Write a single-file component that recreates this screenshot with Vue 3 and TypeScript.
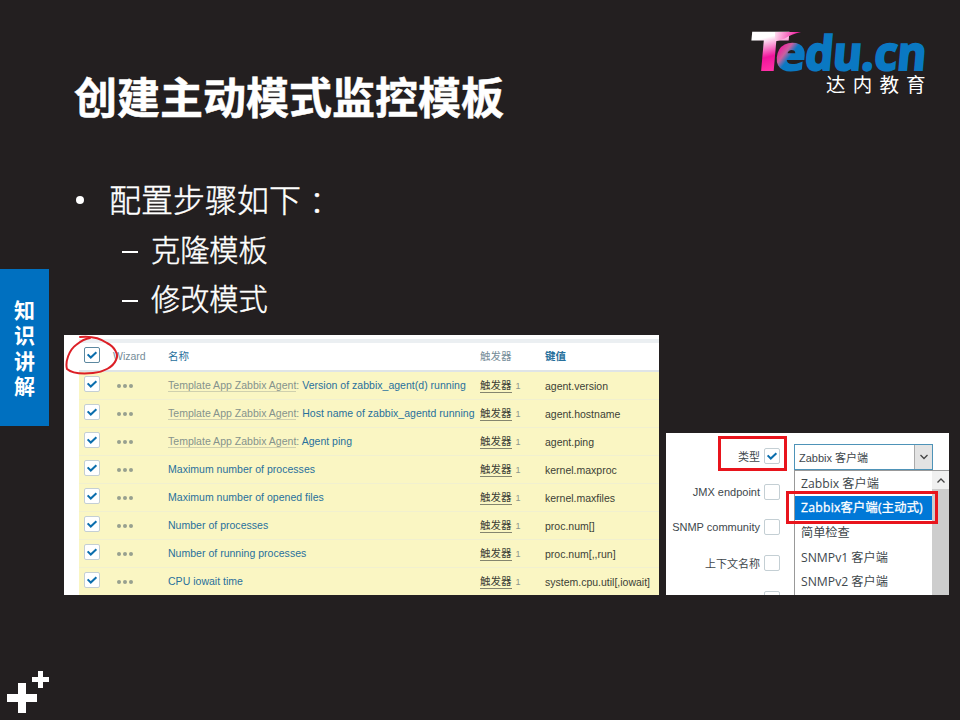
<script setup lang="ts">
interface Item {
  prefix?: string
  name: string
  key: string
}

const template = 'Template App Zabbix Agent'

const items: Item[] = [
  { prefix: template, name: 'Version of zabbix_agent(d) running', key: 'agent.version' },
  { prefix: template, name: 'Host name of zabbix_agentd running', key: 'agent.hostname' },
  { prefix: template, name: 'Agent ping', key: 'agent.ping' },
  { name: 'Maximum number of processes', key: 'kernel.maxproc' },
  { name: 'Maximum number of opened files', key: 'kernel.maxfiles' },
  { name: 'Number of processes', key: 'proc.num[]' },
  { name: 'Number of running processes', key: 'proc.num[,,run]' },
  { name: 'CPU iowait time', key: 'system.cpu.util[,iowait]' },
]

const fields: { label: string; checked: boolean }[] = [
  { label: '类型', checked: true },
  { label: 'JMX endpoint', checked: false },
  { label: 'SNMP community', checked: false },
  { label: '上下文名称', checked: false },
  { label: '', checked: false },
]

const options: string[] = ['Zabbix 客户端', 'Zabbix客户端(主动式)', '简单检查', 'SNMPv1 客户端', 'SNMPv2 客户端']
const selected = 1
const tabChars: string[] = ['知', '识', '讲', '解']
</script>

<template>
  <div class="slide">
    <header class="top">
      <h1 class="title">创建主动模式监控模板</h1>
      <div class="brand">
        <svg class="logo" width="180" height="44" viewBox="0 0 180 44">
          <defs>
            <linearGradient id="gt" gradientUnits="userSpaceOnUse" x1="10" y1="-40" x2="20" y2="0">
              <stop offset="0.2" stop-color="#fff" />
              <stop offset="0.68" stop-color="#f0149c" />
              <stop offset="1" stop-color="#ff2fa6" />
            </linearGradient>
            <linearGradient id="gw" gradientUnits="userSpaceOnUse" x1="26" y1="0" x2="50" y2="6">
              <stop offset="0" stop-color="#ffeaf5" />
              <stop offset="1" stop-color="#f0149c" />
            </linearGradient>
            <linearGradient id="ge" gradientUnits="userSpaceOnUse" x1="1" y1="-20" x2="19" y2="-8">
              <stop offset="0" stop-color="#f3179d" />
              <stop offset="0.4" stop-color="#c9609f" />
              <stop offset="0.7" stop-color="#0a78c2" />
            </linearGradient>
          </defs>
          <g transform="translate(0 43) skewX(-5)">
            <text class="mark cap" textLength="37" lengthAdjust="spacingAndGlyphs" fill="url(#gt)">T</text>
          </g>
          <path d="M26 5H52Q42 7 36 11.500L26 14.500Z" fill="url(#gw)" />
          <g transform="translate(25.500 42.500) skewX(-5)">
            <text class="mark" textLength="30" lengthAdjust="spacingAndGlyphs" fill="url(#ge)" stroke="url(#ge)">e</text>
          </g>
          <g transform="translate(55 42.500) skewX(-5)">
            <text class="mark blue" textLength="121" lengthAdjust="spacingAndGlyphs">du.cn</text>
          </g>
        </svg>
        <div class="brand-name">达内教育</div>
      </div>
    </header>

    <div class="body">
      <aside class="tab">
        <span v-for="c in tabChars" :key="c">{{ c }}</span>
      </aside>

      <main class="content">
        <ul class="steps">
          <li class="lead"><i class="dot"></i><span>配置步骤如下</span><span class="colon">：</span></li>
          <li class="sub"><i class="dash"></i><span>克隆模板</span></li>
          <li class="sub"><i class="dash"></i><span>修改模式</span></li>
        </ul>

        <div class="shots">
          <section class="items">
            <div class="strip"></div>
            <div class="row head">
              <span class="box dark">
                <svg viewBox="0 0 16 16"><path d="M3 7.300 6.600 10.900 13 4.800" /></svg>
              </span>
              <span class="wizard">Wizard</span>
              <span class="name link">名称</span>
              <span class="trig-head">触发器</span>
              <span class="key link strong">键值</span>
            </div>
            <div v-for="it in items" :key="it.name" class="row item">
              <span class="box">
                <svg viewBox="0 0 16 16"><path d="M3 7.300 6.600 10.900 13 4.800" /></svg>
              </span>
              <span class="dots"><i></i><i></i><i></i></span>
              <span class="name"><template v-if="it.prefix"><span class="prefix">{{ it.prefix }}</span><span class="grey">: </span></template><span class="link">{{ it.name }}</span></span>
              <span class="trig"><span class="under">触发器</span><small>1</small></span>
              <span class="key">{{ it.key }}</span>
            </div>
            <svg class="ring" width="60" height="46" viewBox="0 0 60 46">
              <path d="M16 2C26 1 36 3 43 8C51 12 55 20 52 25C49 32 40 37 29 38C18 39 8 38.500 3 34C1 27 5 15 12 10C17 6 21 3.500 26 3" />
            </svg>
          </section>

          <section class="form">
            <div class="labels">
              <div v-for="f in fields" :key="f.label" class="field">
                <span>{{ f.label }}</span>
                <span class="box">
                  <svg v-if="f.checked" viewBox="0 0 16 16"><path d="M3 7.300 6.600 10.900 13 4.800" /></svg>
                </span>
              </div>
            </div>
            <div class="picker">
              <div class="select">
                <span>Zabbix 客户端</span>
                <span class="arrow">
                  <svg width="10" height="6" viewBox="0 0 10 6"><path d="M1.500 1 5 4.500 8.500 1" /></svg>
                </span>
              </div>
              <div class="menu">
                <div class="options">
                  <div v-for="(o, i) in options" :key="o" class="option" :class="{ on: i === selected }">{{ o }}</div>
                </div>
                <div class="scroll">
                  <div class="up"><svg width="10" height="7" viewBox="0 0 10 7"><path d="M1.500 5.500 5 2 8.500 5.500" /></svg></div>
                </div>
              </div>
            </div>
            <div class="mark-box type-mark"></div>
            <div class="mark-box option-mark"></div>
          </section>
        </div>
      </main>
    </div>

    <footer class="foot">
      <svg width="50" height="50" viewBox="0 0 50 50">
        <path class="plus" d="M18 13h8v11h11v8h-11v11h-8v-11h-11v-8h11zM38 1h5v6h6v5h-6v6h-5v-6h-6v-5h6z" />
      </svg>
    </footer>
  </div>
</template>

<style>
body {
  background: #231f20;
}
</style>

<style scoped>
.slide {
  width: 960px;
  height: 720px;
  background: #231f20;
  color: #fff;
  font-family: 'Liberation Sans', 'Noto Sans CJK SC', sans-serif;
  display: flex;
  flex-direction: column;
  overflow: hidden;
}
.top {
  height: 160px;
  flex: none;
  display: flex;
  justify-content: space-between;
  padding: 0 31px 0 74px;
  box-sizing: border-box;
}
.title {
  margin: 64px 0 0;
  font: 700 43px/62px 'Noto Sans CJK SC', sans-serif;
  -webkit-text-stroke: 0.5px #fff;
  white-space: nowrap;
}
.brand {
  width: 180px;
  padding-top: 27px;
}
.logo {
  display: block;
  overflow: visible;
}
.mark {
  font: 700 47px 'Noto Sans', sans-serif;
  stroke-width: 2.200;
}
.mark.cap {
  font-size: 52px;
  stroke: url(#gt);
}
.blue {
  fill: #0a78c2;
  stroke: #0a78c2;
}
.brand-name {
  font: 400 19.500px/26px 'Noto Sans CJK SC', sans-serif;
  letter-spacing: 7.200px;
  padding-left: 77px;
  white-space: nowrap;
}
.body {
  display: flex;
  height: 435px;
  flex: none;
}
.tab {
  width: 49px;
  height: 157px;
  margin-top: 109px;
  flex: none;
  background: #0070c0;
  display: flex;
  flex-direction: column;
  align-items: center;
  justify-content: center;
  font: 700 21px/25.500px 'Noto Sans CJK SC', sans-serif;
}
.content {
  padding-left: 15px;
  flex: none;
}
.steps {
  list-style: none;
  margin: 0;
  padding: 13px 0 0;
  height: 175px;
  box-sizing: border-box;
  font-family: 'Noto Sans CJK SC', sans-serif;
  font-weight: 300;
  -webkit-text-stroke: 0.45px #fff;
}
.steps li {
  display: flex;
  align-items: center;
  white-space: nowrap;
}
.lead {
  font-size: 32px;
  height: 50px;
  padding-left: 12px;
}
.dot {
  width: 8px;
  height: 8px;
  border-radius: 50%;
  background: #fff;
  margin: 4px 25px 0 0;
}
.colon {
  font-family: 'Noto Sans CJK TC', sans-serif;
  font-size: 30px;
  padding: 5px 0 0 1px;
}
.sub {
  font-size: 29.200px;
  height: 49px;
  padding: 1px 0 0 58px;
  box-sizing: border-box;
}
.dash {
  width: 16px;
  height: 2px;
  background: #fff;
  margin: 8px 13px 0 0;
}
.shots {
  display: flex;
  align-items: flex-end;
  gap: 7px;
  height: 260px;
}
.items {
  position: relative;
  width: 595px;
  height: 260px;
  background: #fff;
  overflow: hidden;
  font-size: 10.500px;
  color: #3c3f36;
}
.strip {
  height: 4px;
  margin: 4px 0 0 15px;
  background: #ebeff2;
}
.row {
  display: grid;
  grid-template-columns: 31px 54px 312px 65px 1fr;
  align-items: center;
  margin-left: 15px;
  padding-left: 4px;
  height: 28px;
  box-sizing: border-box;
  white-space: nowrap;
}
.head {
  color: #768d99;
  height: 29px;
  padding-bottom: 4px;
  border-bottom: 2px solid #dfe4e7;
  align-items: start;
  line-height: 26px;
}
.wizard {
  margin-left: -1px;
}
.item {
  background: #faf6c3;
  border-bottom: 1px solid #f1f0cf;
}
.item .name {
  margin-top: -1px;
  letter-spacing: 0.020px;
}
.box {
  width: 16px;
  height: 16px;
  border: 1px solid #c4cfd4;
  border-radius: 2px;
  background: #fff;
  box-sizing: border-box;
  display: block;
}
.item .box {
  margin: -3px 0 0;
}
.box svg {
  display: block;
  width: 14px;
  height: 14px;
}
.box path {
  fill: none;
  stroke: #0b6ead;
  stroke-width: 2.300;
}
.box.dark {
  border-color: #5c88a0;
  margin: 4px 0 0;
}
.row .box {
  margin-left: 0.500px;
}
.link {
  color: #28709c;
}
.strong {
  font-weight: 700;
}
.prefix {
  color: #85938c;
  border-bottom: 1px solid #cfd0ae;
}
.grey {
  color: #85938c;
}
.dots {
  display: flex;
  gap: 2px;
  padding-left: 3px;
}
.dots i {
  width: 4px;
  height: 4px;
  border-radius: 50%;
  background: #97a08f;
}
.trig {
  display: flex;
  align-items: baseline;
  gap: 4px;
  margin-top: 1px;
}
.under {
  border-bottom: 1px solid #84856f;
  line-height: 13px;
}
.trig small {
  font-size: 9px;
  color: #8d968c;
}
.ring {
  position: absolute;
  left: 0;
  top: 0;
}
.ring path {
  fill: none;
  stroke: #dc1f26;
  stroke-width: 2;
  stroke-linecap: round;
}
.form {
  position: relative;
  width: 283px;
  height: 162px;
  background: #fff;
  color: #40474c;
  display: flex;
  overflow: hidden;
  font-size: 11px;
}
.labels {
  width: 114px;
  margin-right: 14px;
  padding-top: 5.500px;
  flex: none;
}
.field {
  height: 35.600px;
  display: flex;
  align-items: center;
  justify-content: flex-end;
  gap: 4px;
  white-space: nowrap;
}
.picker {
  flex: 1;
  padding-top: 11px;
}
.select {
  width: 139px;
  height: 26px;
  border: 1px solid #4e93b8;
  box-sizing: border-box;
  display: flex;
  justify-content: space-between;
  align-items: center;
  padding-left: 4px;
}
.arrow {
  width: 18px;
  height: 24px;
  background: #e3e3e3;
  border-left: 1px solid #aaa;
  box-sizing: border-box;
  display: flex;
  align-items: center;
  justify-content: center;
}
.arrow path,
.up path {
  fill: none;
  stroke: #444;
  stroke-width: 1.300;
}
.menu {
  display: flex;
  height: 126px;
  border: 1px solid #999;
  border-right: 0;
  box-sizing: border-box;
}
.options {
  width: 137px;
  font: 12.200px/24.500px 'Open Sans', 'Noto Sans CJK SC', sans-serif;
}
.option {
  height: 24.500px;
  line-height: 26px;
  padding-left: 6px;
  white-space: nowrap;
}
.option.on {
  background: #0078d7;
  color: #fff;
  line-height: 24.500px;
  letter-spacing: 0.250px;
  -webkit-text-stroke: 0.3px #fff;
}
.scroll {
  flex: 1;
  background: #cdcdcd;
}
.up {
  height: 18px;
  background: #f0f0f0;
  display: flex;
  align-items: center;
  justify-content: center;
}
.mark-box {
  position: absolute;
  border: 3px solid #e8141c;
  box-sizing: border-box;
}
.type-mark {
  left: 52px;
  top: 3px;
  width: 69px;
  height: 35px;
}
.option-mark {
  left: 120px;
  top: 58px;
  width: 152px;
  height: 33px;
}
.foot {
  margin-top: 75px;
  height: 50px;
}
.foot svg {
  display: block;
}
.plus {
  fill: #fff;
}
</style>
